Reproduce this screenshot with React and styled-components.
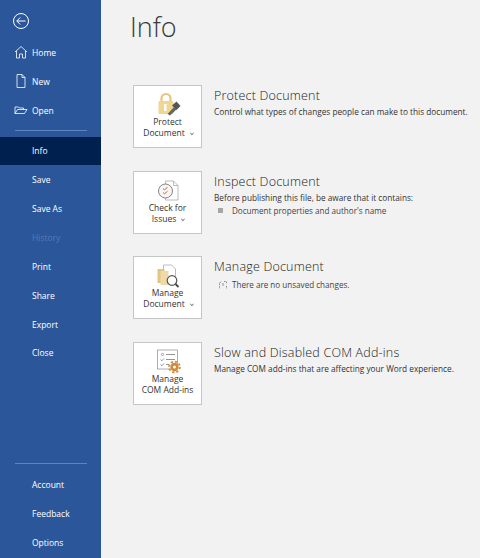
import React from 'react'
import styled, { createGlobalStyle } from 'styled-components'

const GlobalStyle = createGlobalStyle`
  html, body { margin: 0; padding: 0; height: 100%; }
  body { font-family: 'Open Sans', 'Liberation Sans', sans-serif; background: #f2f2f2; overflow: hidden; }
  #root { height: 100%; }
`

const Page = styled.div`
  display: flex;
  width: 480px;
  height: 558px;
  background: #f2f2f2;
`

const Sidebar = styled.nav`
  display: flex;
  flex-direction: column;
  width: 101px;
  height: 558px;
  padding-bottom: 1px;
  box-sizing: border-box;
  flex-shrink: 0;
  background: #2b579a;
  color: #fff;
`

const BackButton = styled.div`
  display: flex;
  height: 38px;
  box-sizing: border-box;
  padding: 12px 0 0 12px;
  svg { display: block; }
`

const NavItem = styled.div`
  display: flex;
  align-items: center;
  height: 28.85px;
  padding-left: 32px;
  position: relative;
  font-size: 8.5px;
  color: ${p => (p.$disabled ? '#5379b2' : '#fff')};
  background: ${p => (p.$active ? '#002050' : 'transparent')};
`

const NavIcon = styled.span`
  position: absolute;
  left: 14px;
  top: 6px;
  width: 14px;
  height: 16px;
  svg { display: block; }
`

const Divider = styled.div`
  height: 1px;
  margin: ${p => p.$margin};
  background: #5b85c0;
`

const Spacer = styled.div`
  flex: 1;
`

const Main = styled.main`
  flex: 1;
  padding: 8px 0 0 29px;
`

const Title = styled.h1`
  margin: 0 0 40px;
  font-size: 27px;
  line-height: 37px;
  font-weight: 300;
  color: #3a3a3a;
`

const Section = styled.section`
  display: flex;
  height: 63px;
  margin: 0 0 ${p => p.$gap}px 3px;
`

const ActionButton = styled.div`
  display: flex;
  flex-direction: column;
  align-items: center;
  width: 69px;
  height: 63px;
  box-sizing: border-box;
  flex-shrink: 0;
  background: #fff;
  border: 1px solid #c6c6c6;
  font-size: 8.5px;
  line-height: 11px;
  color: #333;
  text-align: center;
`

const IconSlot = styled.div`
  width: 34px;
  height: 30px;
  flex-shrink: 0;
  svg { display: block; overflow: visible; }
`

const Chevron = styled.span`
  display: inline-block;
  width: 2px;
  height: 2px;
  margin-left: 4px;
  border-right: 1px solid #888;
  border-bottom: 1px solid #888;
  transform: rotate(45deg) translateY(-2px);
`

const Body = styled.div`
  padding: 2px 0 0 12px;
  min-width: 0;
`

const Heading = styled.h2`
  margin: 0 0 1px;
  font-size: 12.5px;
  line-height: 17px;
  font-weight: 300;
  letter-spacing: 0.2px;
  color: #222;
  white-space: nowrap;
`

const Text = styled.div`
  font-size: 8.25px;
  line-height: 13px;
  color: #333;
  white-space: nowrap;
`

const Bullet = styled.div`
  display: flex;
  align-items: center;
  padding-top: ${p => p.$top || 0}px;
  font-size: 8.1px;
  line-height: 13px;
  color: #444;
  white-space: nowrap;
`

const Marker = styled.span`
  display: inline-flex;
  justify-content: center;
  align-items: center;
  width: 18px;
  flex-shrink: 0;
`

const Square = styled.span`
  display: block;
  width: 5px;
  height: 5px;
  margin-right: 5px;
  background: #a6a6a6;
`

const ArrowIcon = () => (
  <svg width="18" height="18" viewBox="0 0 18 18" fill="none" stroke="#fff" strokeWidth="1">
    <circle cx="9" cy="9" r="7.5" />
    <path d="M13.5 9H4.8M8.2 5.5 4.8 9l3.4 3.5" />
  </svg>
)

const HomeIcon = () => (
  <svg width="14" height="16" viewBox="0 0 14 16" fill="none" stroke="#fff" strokeWidth="0.8">
    <path d="M1 8 7 2.5 13 8M2.5 7v7h3v-4h3v4h3V7" />
  </svg>
)

const NewIcon = () => (
  <svg width="14" height="16" viewBox="0 0 14 16" fill="none" stroke="#fff" strokeWidth="0.8">
    <path d="M3 1.5h5l3 3v10H3zM8 1.5v3h3" />
  </svg>
)

const OpenIcon = () => (
  <svg width="14" height="16" viewBox="0 0 14 16" fill="none" stroke="#fff" strokeWidth="0.8">
    <path d="M1 11.5V5h3.5l1 1h4v1.5M1 11.5 3.5 7.5h9.5L10.5 11.5z" />
  </svg>
)

const LockIcon = () => (
  <svg width="34" height="30" viewBox="0 0 34 30">
    <path d="M10.5 16v-3.5a4.5 4.5 0 0 1 9 0V16" fill="none" stroke="#e6c67e" strokeWidth="2.2" />
    <rect x="7.5" y="15" width="15" height="13" rx="1" fill="#f1d68f" />
    <rect x="13" y="18" width="2.5" height="7" fill="#fff" />
    <path d="M16.5 28 23 21l2.5 2.5-6.5 6z" fill="#666" />
    <path d="M25.5 15.5l4 4.5-4 4-4.5-4.5z" fill="#555" />
  </svg>
)

const InspectIcon = () => (
  <svg width="34" height="30" viewBox="0 0 34 30" fill="none">
    <path d="M14.5 9h8l4.5 4.5V28H14.5z" fill="#fff" stroke="#aaa" strokeWidth="0.8" />
    <path d="M22.5 9v4.5H27" stroke="#aaa" strokeWidth="0.8" />
    <circle cx="14.5" cy="19" r="7" fill="#f6f6f6" stroke="#777" strokeWidth="0.9" />
    <path d="M12 16.5l1.5 1.3 3-2.5M12 20.5l1.5 1.3 3-2.5" stroke="#d2603a" strokeWidth="1" />
  </svg>
)

const ManageIcon = () => (
  <svg width="34" height="30" viewBox="0 0 34 30" fill="none">
    <path d="M12.5 8h8l4 4v14h-12z" fill="#fff" stroke="#aaa" strokeWidth="0.8" />
    <rect x="6.5" y="12" width="7" height="14" fill="#e3c483" />
    <rect x="9.5" y="14" width="8" height="14" fill="#f0d9a8" />
    <circle cx="21" cy="23.5" r="4.8" fill="#fff" stroke="#555" strokeWidth="1.2" />
    <path d="M24.5 27 27.5 30" stroke="#444" strokeWidth="1.8" />
  </svg>
)

const AddInsIcon = () => (
  <svg width="34" height="30" viewBox="0 0 34 30" fill="none">
    <rect x="6.5" y="7" width="20" height="19" fill="#fff" stroke="#999" strokeWidth="0.8" />
    <circle cx="11.5" cy="11.5" r="1.2" stroke="#777" strokeWidth="0.6" />
    <path d="M15 11.5h9M15 16.5h9M15 21.5h3" stroke="#777" strokeWidth="0.8" />
    <path d="M9.5 16.5l1.3 1.3 2.2-2.3M9.5 21.5l1.3 1.3 2.2-2.3" stroke="#4f7ab3" strokeWidth="0.8" />
    <circle cx="23.5" cy="24" r="4.2" fill="#d08a3a" />
    <circle cx="23.5" cy="24" r="5.4" stroke="#d08a3a" strokeWidth="1.8" strokeDasharray="2.2 2" />
    <circle cx="23.5" cy="24" r="1.5" fill="#fff" />
  </svg>
)

const UnsavedIcon = () => (
  <svg width="10" height="10" viewBox="0 0 10 10" fill="none" stroke="#777" strokeWidth="0.8">
    <path d="M1.5 3.5V9M1.5 3 4 1.5M6 1.5h2.5V4M8.5 6v3" strokeDasharray="1.6 1" />
    <path d="M5 3v3" />
  </svg>
)

const topNav = [
  { label: 'Home', icon: <HomeIcon /> },
  { label: 'New', icon: <NewIcon /> },
  { label: 'Open', icon: <OpenIcon /> },
]

const middleNav = [
  { label: 'Info', active: true },
  { label: 'Save' },
  { label: 'Save As' },
  { label: 'History', disabled: true },
  { label: 'Print' },
  { label: 'Share' },
  { label: 'Export' },
  { label: 'Close' },
]

const bottomNav = ['Account', 'Feedback', 'Options']

export default function App() {
  return (
    <Page>
      <GlobalStyle />
      <Sidebar>
        <BackButton><ArrowIcon /></BackButton>
        {topNav.map(item => (
          <NavItem key={item.label}>
            <NavIcon>{item.icon}</NavIcon>
            {item.label}
          </NavItem>
        ))}
        <Divider $margin="5px 14px 6px 15px" />
        {middleNav.map(item => (
          <NavItem key={item.label} $active={item.active} $disabled={item.disabled}>
            {item.label}
          </NavItem>
        ))}
        <Spacer />
        <Divider $margin="0 14px 6px 15px" />
        {bottomNav.map(label => (
          <NavItem key={label}>{label}</NavItem>
        ))}
      </Sidebar>
      <Main>
        <Title>Info</Title>
        <Section $gap={22.5}>
          <ActionButton>
            <IconSlot><LockIcon /></IconSlot>
            <span>Protect</span>
            <span>Document<Chevron /></span>
          </ActionButton>
          <Body>
            <Heading>Protect Document</Heading>
            <Text>Control what types of changes people can make to this document.</Text>
          </Body>
        </Section>
        <Section $gap={22.5}>
          <ActionButton>
            <IconSlot><InspectIcon /></IconSlot>
            <span>Check for</span>
            <span>Issues<Chevron /></span>
          </ActionButton>
          <Body>
            <Heading>Inspect Document</Heading>
            <Text>Before publishing this file, be aware that it contains:</Text>
            <Bullet><Marker><Square /></Marker>Document properties and author's name</Bullet>
          </Body>
        </Section>
        <Section $gap={22.5}>
          <ActionButton>
            <IconSlot><ManageIcon /></IconSlot>
            <span>Manage</span>
            <span>Document<Chevron /></span>
          </ActionButton>
          <Body>
            <Heading>Manage Document</Heading>
            <Bullet $top={2}><Marker><UnsavedIcon /></Marker>There are no unsaved changes.</Bullet>
          </Body>
        </Section>
        <Section $gap={0}>
          <ActionButton>
            <IconSlot><AddInsIcon /></IconSlot>
            <span>Manage</span>
            <span>COM Add-ins</span>
          </ActionButton>
          <Body>
            <Heading>Slow and Disabled COM Add-ins</Heading>
            <Text>Manage COM add-ins that are affecting your Word experience.</Text>
          </Body>
        </Section>
      </Main>
    </Page>
  )
}
